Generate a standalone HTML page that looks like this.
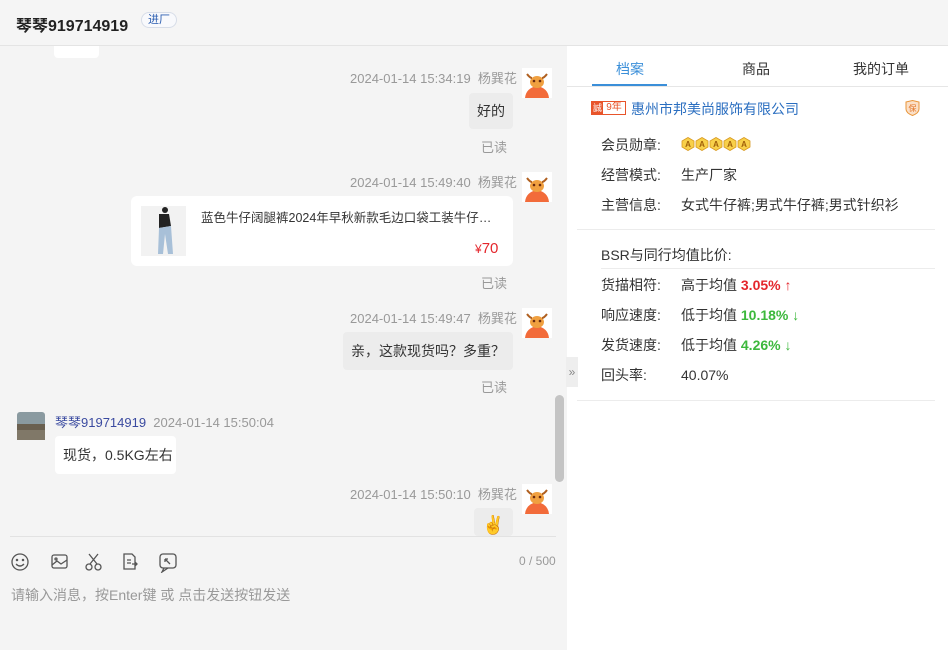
<!DOCTYPE html>
<html><head><meta charset="utf-8"><style>
*{margin:0;padding:0;box-sizing:border-box}
body{width:948px;height:650px;overflow:hidden;background:#f4f4f4;font-family:"Liberation Sans","Noto Sans CJK SC",sans-serif;position:relative;font-size:13px;color:#333}
.a{position:absolute}
.hdr{left:0;top:0;width:948px;height:46px;background:#f5f5f5;border-bottom:1px solid #e4e4e4}
.meta{color:#999;font-size:13px;white-space:nowrap}
.bub{background:#ececec;border-radius:4px;font-size:14px;color:#333}
.w{background:#fff;border-radius:6px}
.read{color:#999;font-size:13px}
.rp{left:567px;top:46px;width:381px;height:604px;background:#fff}
.lab{color:#333;font-size:14px;line-height:18px}
</style></head><body>
<div class="a hdr"></div>
<div class="a" style="left:16px;top:12px;font-size:16px;font-weight:bold;color:#222">琴琴919714919</div>
<div class="a" style="left:141px;top:12px;width:36px;height:16px;border:1px solid #d7dde8;border-radius:8px;font-size:11px;color:#2a5db0;text-align:center;line-height:14px;background:#f8f9fc">进厂</div>

<div class="a w" style="left:54px;top:46px;width:45px;height:12px;border-radius:0 0 4px 4px"></div>

<div class="a meta" style="left:350px;top:68px">2024-01-14 15:34:19&nbsp;&nbsp;杨巽花</div>
<svg class="a" style="left:522px;top:68px" width="30" height="30" viewBox="0 0 30 30"><rect width="30" height="30" fill="#fff"/><path d="M3 30 Q4 20 15 18 Q26 20 27 30Z" fill="#f26b3a"/><ellipse cx="15" cy="14" rx="7" ry="6" fill="#f0a040"/><path d="M5 6 Q8 10 10 10 M25 6 Q22 10 20 10" stroke="#b06020" stroke-width="2" fill="none"/><circle cx="12" cy="13" r="1.3" fill="#6a2a10"/><circle cx="18" cy="13" r="1.3" fill="#6a2a10"/></svg>
<div class="a bub" style="left:469px;top:93px;width:44px;height:36px;line-height:36px;text-align:center">好的</div>
<div class="a read" style="left:481px;top:137px">已读</div>

<div class="a meta" style="left:350px;top:172px">2024-01-14 15:49:40&nbsp;&nbsp;杨巽花</div>
<svg class="a" style="left:522px;top:172px" width="30" height="30" viewBox="0 0 30 30"><rect width="30" height="30" fill="#fff"/><path d="M3 30 Q4 20 15 18 Q26 20 27 30Z" fill="#f26b3a"/><ellipse cx="15" cy="14" rx="7" ry="6" fill="#f0a040"/><path d="M5 6 Q8 10 10 10 M25 6 Q22 10 20 10" stroke="#b06020" stroke-width="2" fill="none"/><circle cx="12" cy="13" r="1.3" fill="#6a2a10"/><circle cx="18" cy="13" r="1.3" fill="#6a2a10"/></svg>
<div class="a w" style="left:131px;top:196px;width:382px;height:70px"></div>
<svg class="a" style="left:141px;top:206px" width="45" height="50" viewBox="0 0 45 50"><rect width="45" height="50" fill="#f2f2f2"/><circle cx="24" cy="4" r="3" fill="#222"/><path d="M18 8 L28 8 L30 20 L18 22Z" fill="#222"/><path d="M18 22 L30 20 L32 48 L27 48 L24 28 L22 48 L17 48Z" fill="#a8c0d8"/></svg>
<div class="a" style="left:201px;top:207px;width:300px;font-size:12.5px;color:#333;white-space:nowrap;overflow:hidden;text-overflow:ellipsis">蓝色牛仔阔腿裤2024年早秋新款毛边口袋工装牛仔阔腿裤女</div>
<div class="a" style="left:475px;top:240px;font-size:15px;color:#e4262c"><span style="font-size:12px">¥</span>70</div>
<div class="a read" style="left:481px;top:273px">已读</div>

<div class="a meta" style="left:350px;top:308px">2024-01-14 15:49:47&nbsp;&nbsp;杨巽花</div>
<svg class="a" style="left:522px;top:308px" width="30" height="30" viewBox="0 0 30 30"><rect width="30" height="30" fill="#fff"/><path d="M3 30 Q4 20 15 18 Q26 20 27 30Z" fill="#f26b3a"/><ellipse cx="15" cy="14" rx="7" ry="6" fill="#f0a040"/><path d="M5 6 Q8 10 10 10 M25 6 Q22 10 20 10" stroke="#b06020" stroke-width="2" fill="none"/><circle cx="12" cy="13" r="1.3" fill="#6a2a10"/><circle cx="18" cy="13" r="1.3" fill="#6a2a10"/></svg>
<div class="a bub" style="left:343px;top:332px;width:170px;height:38px;line-height:38px;padding-left:8px">亲，这款现货吗？多重？</div>
<div class="a read" style="left:481px;top:377px">已读</div>

<svg class="a" style="left:17px;top:412px" width="28" height="28" viewBox="0 0 28 28"><rect width="28" height="28" rx="3" fill="#8a9aa0"/><rect y="12" width="28" height="6" fill="#6a6050"/><rect y="18" width="28" height="10" fill="#807868"/></svg>
<div class="a" style="left:55px;top:412px;font-size:13px;color:#3a4aa0">琴琴919714919 <span style="color:#999">&nbsp;2024-01-14 15:50:04</span></div>
<div class="a w" style="left:55px;top:436px;width:121px;height:38px;line-height:38px;padding-left:8px;font-size:14px;border-radius:4px">现货，0.5KG左右</div>

<div class="a meta" style="left:350px;top:484px">2024-01-14 15:50:10&nbsp;&nbsp;杨巽花</div>
<svg class="a" style="left:522px;top:484px" width="30" height="30" viewBox="0 0 30 30"><rect width="30" height="30" fill="#fff"/><path d="M3 30 Q4 20 15 18 Q26 20 27 30Z" fill="#f26b3a"/><ellipse cx="15" cy="14" rx="7" ry="6" fill="#f0a040"/><path d="M5 6 Q8 10 10 10 M25 6 Q22 10 20 10" stroke="#b06020" stroke-width="2" fill="none"/><circle cx="12" cy="13" r="1.3" fill="#6a2a10"/><circle cx="18" cy="13" r="1.3" fill="#6a2a10"/></svg>
<div class="a bub" style="left:474px;top:508px;width:39px;height:28px;text-align:center;line-height:34px;overflow:hidden;font-size:18px">✌</div>

<div class="a" style="left:555px;top:395px;width:9px;height:87px;background:#c4c4c4;border-radius:5px"></div>
<div class="a" style="left:10px;top:536px;width:546px;height:1px;background:#e2e2e2"></div>

<svg class="a" style="left:10px;top:551px" width="170" height="22" viewBox="0 0 170 22" fill="none" stroke="#555" stroke-width="1.3">
<circle cx="10" cy="11" r="8"/><circle cx="7" cy="9" r=".6"/><circle cx="13" cy="9" r=".6"/><path d="M6 13 Q10 17 14 13"/>
<rect x="42" y="4" width="15" height="13" rx="2"/><path d="M42 14 L47 10 L51 13 L57 9"/><circle cx="46" cy="8" r="1"/>
<circle cx="79" cy="16" r="3"/><circle cx="88" cy="16" r="3"/><path d="M80 13 L88 3 M87 13 L79 3"/>
<path d="M114 3 H122 L125 6 V18 H114Z M117 9 H121 M117 12 H121 M122 13 H127 M125 11 L127 13 L125 15"/>
<rect x="150" y="3" width="16" height="14" rx="3"/><path d="M154 17 L152 21 L158 17 M155 8 L160 13 M155 8 L155 11 M155 8 L158 8"/>
</svg>
<div class="a" style="left:519px;top:554px;color:#999;font-size:12px">0 / 500</div>
<div class="a" style="left:11px;top:585px;color:#999;font-size:14px">请输入消息，按Enter键 或 点击发送按钮发送</div>

<div class="a rp"></div>
<div class="a" style="left:566px;top:357px;width:12px;height:30px;background:#eee;color:#888;font-size:12px;text-align:center;line-height:30px">»</div>
<div class="a" style="left:567px;top:86px;width:381px;height:1px;background:#e6e6e6"></div>
<div class="a" style="left:616px;top:59px;font-size:14px;color:#3b8fd9">档案</div>
<div class="a" style="left:592px;top:84px;width:75px;height:2px;background:#3b8fd9"></div>
<div class="a" style="left:742px;top:59px;font-size:14px;color:#333">商品</div>
<div class="a" style="left:853px;top:59px;font-size:14px;color:#333">我的订单</div>

<div class="a" style="left:591px;top:101px;width:35px;height:14px;border:1px solid #e8542a;font-size:10px;line-height:12px;color:#e8542a;background:#fff;white-space:nowrap;overflow:hidden"><span style="background:#e8542a;color:#fff;display:inline-block;width:11px;height:12px;text-align:center;font-size:9px;vertical-align:top">誠</span><span style="display:inline-block;width:22px;text-align:center">9年</span></div>
<div class="a" style="left:631px;top:99px;font-size:14px;color:#2a6ec0">惠州市邦美尚服饰有限公司</div>
<svg class="a" style="left:905px;top:100px" width="15" height="16" viewBox="0 0 15 16"><path d="M1 2 L7.5 0.5 L14 2 V9 Q14 13 7.5 15.5 Q1 13 1 9Z" fill="#fbe0c8" stroke="#e8963a"/><text x="7.5" y="11" font-size="8" text-anchor="middle" fill="#e07020" font-family="Noto Sans CJK SC">保</text></svg>

<div class="a lab" style="left:601px;top:136px">会员勋章:</div>
<svg class="a" style="left:681px;top:137px" width="72" height="14" viewBox="0 0 72 14"><g fill="#f8d04a" stroke="#d89a20" stroke-width=".8"><polygon points="7,0.5 13,4 13,10 7,13.5 1,10 1,4"/><polygon points="21,0.5 27,4 27,10 21,13.5 15,10 15,4"/><polygon points="35,0.5 41,4 41,10 35,13.5 29,10 29,4"/><polygon points="49,0.5 55,4 55,10 49,13.5 43,10 43,4"/><polygon points="63,0.5 69,4 69,10 63,13.5 57,10 57,4"/></g><g font-size="8" fill="#a0600a" text-anchor="middle" font-family="Liberation Sans" font-weight="bold"><text x="7" y="10">A</text><text x="21" y="10">A</text><text x="35" y="10">A</text><text x="49" y="10">A</text><text x="63" y="10">A</text></g></svg>
<div class="a lab" style="left:601px;top:166px">经营模式:</div>
<div class="a lab" style="left:681px;top:166px">生产厂家</div>
<div class="a lab" style="left:601px;top:196px">主营信息:</div>
<div class="a lab" style="left:681px;top:196px">女式牛仔裤;男式牛仔裤;男式针织衫</div>
<div class="a" style="left:577px;top:229px;width:358px;height:1px;background:#ececec"></div>
<div class="a lab" style="left:601px;top:246px">BSR与同行均值比价:</div>
<div class="a" style="left:601px;top:268px;width:334px;height:1px;background:#ececec"></div>
<div class="a lab" style="left:601px;top:276px">货描相符:</div>
<div class="a lab" style="left:681px;top:276px">高于均值 <b style="color:#e4262c">3.05% ↑</b></div>
<div class="a lab" style="left:601px;top:306px">响应速度:</div>
<div class="a lab" style="left:681px;top:306px">低于均值 <b style="color:#3cb83c">10.18% ↓</b></div>
<div class="a lab" style="left:601px;top:336px">发货速度:</div>
<div class="a lab" style="left:681px;top:336px">低于均值 <b style="color:#3cb83c">4.26% ↓</b></div>
<div class="a lab" style="left:601px;top:366px">回头率:</div>
<div class="a lab" style="left:681px;top:366px">40.07%</div>
<div class="a" style="left:577px;top:400px;width:358px;height:1px;background:#ececec"></div>
</body></html>
